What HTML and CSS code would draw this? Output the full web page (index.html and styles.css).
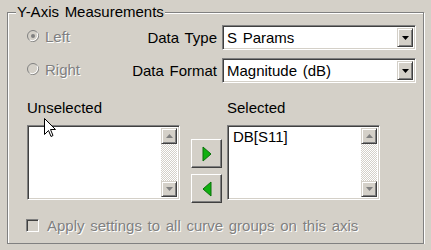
FILE: index.html
```html
<!DOCTYPE html>
<html lang="en">
<head>
    <meta charset="UTF-8">
    <title>Y-Axis Measurements</title>
    <link rel="stylesheet" href="styles.css">
</head>
<body>
    <fieldset class="group">
        <legend>Y-Axis Measurements</legend>
        <div class="inner">
            <div class="top">
                <label class="radio disabled">
                    <svg width="12" height="12" viewBox="0 0 12 12"><circle cx="6" cy="6" r="5.5" fill="#d4d0c8" stroke="#808080"/><path d="M10 2.5 A5.5 5.5 0 0 1 2.5 10" stroke="#fff" fill="none"/><circle cx="6" cy="6" r="2" fill="#808080"/></svg>
                    Left
                </label>
                <span class="lbl">Data Type</span>
                <div class="combo"><span class="val">S Params</span><span class="drop"><svg width="7" height="4" viewBox="0 0 7 4"><path d="M0 0h7L3.5 4z" fill="#000"/></svg></span></div>

                <label class="radio disabled">
                    <svg width="12" height="12" viewBox="0 0 12 12"><circle cx="6" cy="6" r="5.5" fill="#d4d0c8" stroke="#808080"/><path d="M10 2.5 A5.5 5.5 0 0 1 2.5 10" stroke="#fff" fill="none"/></svg>
                    Right
                </label>
                <span class="lbl">Data Format</span>
                <div class="combo"><span class="val">Magnitude (dB)</span><span class="drop"><svg width="7" height="4" viewBox="0 0 7 4"><path d="M0 0h7L3.5 4z" fill="#000"/></svg></span></div>
            </div>

            <div class="lists">
                <div class="col">
                    <div class="cap">Unselected</div>
                    <div class="listbox">
                        <div class="items"></div>
                        <div class="scroll">
                            <span class="arrow"><svg width="7" height="4" viewBox="0 0 7 4"><path d="M3.5 0L7 4H0z" fill="#808080"/></svg></span>
                            <span class="track"></span>
                            <span class="arrow"><svg width="7" height="4" viewBox="0 0 7 4"><path d="M0 0h7L3.5 4z" fill="#808080"/></svg></span>
                        </div>
                    </div>
                </div>
                <div class="moves">
                    <button class="move"><svg width="10" height="16" viewBox="0 0 10 16"><path d="M1 1L9 8L1 15z" fill="#10b010" stroke="#087008"/></svg></button>
                    <button class="move"><svg width="10" height="16" viewBox="0 0 10 16"><path d="M9 1L1 8L9 15z" fill="#10b010" stroke="#087008"/></svg></button>
                </div>
                <div class="col">
                    <div class="cap">Selected</div>
                    <div class="listbox">
                        <div class="items"><div class="item">DB[S11]</div></div>
                        <div class="scroll">
                            <span class="arrow"><svg width="7" height="4" viewBox="0 0 7 4"><path d="M3.5 0L7 4H0z" fill="#808080"/></svg></span>
                            <span class="track"></span>
                            <span class="arrow"><svg width="7" height="4" viewBox="0 0 7 4"><path d="M0 0h7L3.5 4z" fill="#808080"/></svg></span>
                        </div>
                    </div>
                </div>
            </div>

            <label class="check disabled"><span class="box"></span>Apply settings to all curve groups on this axis</label>
        </div>
    </fieldset>

    <svg class="cursor" width="13" height="21" viewBox="0 0 13 21"><path d="M0.5 0.5V16.5L4.5 12.5L7 18.5L9 17.5L6.5 11.5H11.5z" fill="#fff" stroke="#000"/></svg>
</body>
</html>
```

FILE: styles.css
```css
body {
    margin: 0;
    padding: 4px 7px 0;
    background-color: #d4d0c8;
    font-family: "Liberation Sans", Arial, sans-serif;
    font-size: 15px;
    word-spacing: 1.5px;
    color: #000;
    position: relative;
}
.group {
    box-sizing: border-box;
    width: 417px;
    height: 240px;
    margin: 0;
    padding: 0;
    border: 1px solid #808080;
    box-shadow: 1px 1px 0 #fff, inset 1px 1px 0 #fff;
}
.group legend {
    margin-left: 8px;
    padding: 0 1px;
    line-height: 16px;
    background-color: #d4d0c8;
}
.inner {
    padding: 5px 7px 0 19px;
}
.top {
    display: grid;
    grid-template-columns: 90px 1fr 194px;
    grid-auto-rows: 25px;
    column-gap: 5px;
    row-gap: 8px;
    align-items: center;
}
.lbl {
    text-align: right;
}
.radio {
    display: flex;
    align-items: center;
    gap: 6px;
    margin-top: -3px;
}
.disabled {
    color: #808080;
    text-shadow: 1px 1px 0 #fff;
}
.combo {
    box-sizing: border-box;
    height: 25px;
    display: flex;
    align-items: center;
    justify-content: space-between;
    background-color: #fff;
    border: 1px solid;
    border-color: #808080 #fff #fff #808080;
    box-shadow: inset 1px 1px 0 #404040, inset -1px -1px 0 #d4d0c8;
    padding: 2px 2px 2px 4px;
}
.drop, .arrow {
    box-sizing: border-box;
    width: 16px;
    display: flex;
    align-items: center;
    justify-content: center;
    background-color: #d4d0c8;
    border: 1px solid;
    border-color: #d4d0c8 #404040 #404040 #d4d0c8;
    box-shadow: inset 1px 1px 0 #fff, inset -1px -1px 0 #808080;
}
.drop {
    height: 19px;
}
.lists {
    display: flex;
    margin-top: 16px;
}
.cap {
    line-height: 17px;
    margin-bottom: 9px;
}
.listbox {
    box-sizing: border-box;
    width: 153px;
    height: 75px;
    display: flex;
    background-color: #fff;
    border: 1px solid;
    border-color: #808080 #fff #fff #808080;
    box-shadow: inset 1px 1px 0 #404040, inset -1px -1px 0 #d4d0c8;
    padding: 2px 2px 2px 2px;
}
.items {
    flex: 1;
    padding: 0 3px;
    line-height: 17px;
}
.scroll {
    width: 16px;
    display: flex;
    flex-direction: column;
}
.arrow {
    height: 16px;
}
.track {
    flex: 1;
    background: repeating-conic-gradient(#fff 0 25%, #d4d0c8 0 50%) 0 0 / 2px 2px;
}
.moves {
    display: flex;
    flex-direction: column;
    gap: 6px;
    margin: 40px 5px 0 11px;
}
.move {
    box-sizing: border-box;
    width: 31px;
    height: 29px;
    padding: 0;
    display: flex;
    align-items: center;
    justify-content: center;
    background-color: #d4d0c8;
    border: 1px solid;
    border-color: #fff #404040 #404040 #fff;
    box-shadow: inset -1px -1px 0 #808080;
}
.check {
    display: flex;
    align-items: center;
    gap: 8px;
    margin-top: 14px;
}
.box {
    box-sizing: border-box;
    width: 13px;
    height: 13px;
    border: 1px solid;
    border-color: #808080 #fff #fff #808080;
    box-shadow: inset 1px 1px 0 #404040;
    background-color: #d4d0c8;
    margin-left: -1px;
}
.cursor {
    position: absolute;
    left: 44px;
    top: 118px;
}
```
